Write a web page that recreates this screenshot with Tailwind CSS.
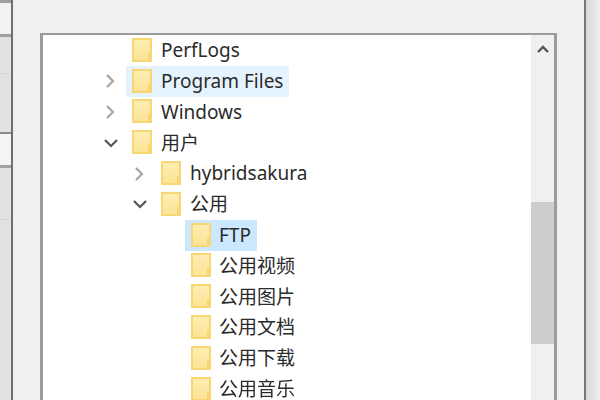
<!doctype html>
<html lang="zh">
  <head>
    <meta charset="UTF-8" />
    <title>FTP</title>
    <script src="https://cdn.jsdelivr.net/npm/@tailwindcss/browser@4"></script>
  </head>
  <body class="w-[600px] h-[400px] overflow-hidden bg-[#f0f0f0] font-['Noto_Sans','Noto_Sans_CJK_SC',sans-serif] text-[19px] text-[#2b2b2b]">
    <svg width="0" height="0" class="absolute">
      <defs>
        <linearGradient id="folderfill" x1="0" y1="0" x2="0" y2="1">
          <stop offset="0" stop-color="#fdeeb4" />
          <stop offset="1" stop-color="#fde394" />
        </linearGradient>
        <g id="folder">
          <rect x="1" y="1" width="18" height="22" fill="url(#folderfill)" stroke="#f7d674" stroke-width="2" />
          <rect x="16" y="15" width="4" height="9" fill="#f7d674" />
        </g>
        <path id="right" d="M2 2l6 6-6 6" fill="none" stroke="#a6a6a6" stroke-width="2.2" />
        <path id="down" d="M2 2l6 6 6-6" fill="none" stroke="#555" stroke-width="2.2" />
      </defs>
    </svg>
    <div class="flex h-full blur-[0.4px]">
      <!-- window behind the dialog -->
      <div class="w-[13px] shrink-0 flex flex-col border-r-2 border-[#6e6e6e]">
        <div class="h-[37px] bg-[#f2f2f2] border-y-[3px] border-[#a0a0a0]"></div>
        <div class="h-[37px] bg-[#e2e2e2] border-b border-[#d6d6d6]"></div>
        <div class="h-[60px] bg-[#e2e2e2] border-b-2 border-[#8c8c8c]"></div>
        <div class="h-[34px] bg-[#f4f4f4] border-b-[3px] border-[#a0a0a0]"></div>
        <div class="h-[52px] bg-[#e2e2e2] border-b border-[#d6d6d6]"></div>
        <div class="flex-1 bg-[#e2e2e2]"></div>
      </div>

      <!-- dialog -->
      <div class="w-[571px] shrink-0 pl-[27px] pr-[27px] pt-[33px]">
        <div class="h-[367px] flex bg-white border-l-[3px] border-r-[3px] border-t-[2px] border-[#9c9c9c]">
          <div class="flex-1 min-w-0">
            <div class="h-[30.8px] flex items-center pl-[89px]">
              <svg width="21" height="25" class="mr-[8px]"><use href="#folder" /></svg>
              <span>PerfLogs</span>
            </div>
            <div class="h-[30.8px] flex items-center pl-[83px]">
              <div class="absolute ml-[-21px]"><svg width="10" height="16" class="block"><use href="#right" /></svg></div>
              <div class="h-full flex items-center pl-[6px] pr-[6px] bg-[#e5f3ff]">
                <svg width="21" height="25" class="mr-[8px]"><use href="#folder" /></svg>
                <span>Program Files</span>
              </div>
            </div>
            <div class="h-[30.8px] flex items-center pl-[89px]">
              <div class="absolute ml-[-27px]"><svg width="10" height="16" class="block"><use href="#right" /></svg></div>
              <svg width="21" height="25" class="mr-[8px]"><use href="#folder" /></svg>
              <span>Windows</span>
            </div>
            <div class="h-[30.8px] flex items-center pl-[89px]">
              <div class="absolute ml-[-29px]"><svg width="16" height="10" class="block"><use href="#down" /></svg></div>
              <svg width="21" height="25" class="mr-[8px]"><use href="#folder" /></svg>
              <span>用户</span>
            </div>
            <div class="h-[30.8px] flex items-center pl-[118px]">
              <div class="absolute ml-[-27px]"><svg width="10" height="16" class="block"><use href="#right" /></svg></div>
              <svg width="21" height="25" class="mr-[8px]"><use href="#folder" /></svg>
              <span>hybridsakura</span>
            </div>
            <div class="h-[30.8px] flex items-center pl-[118px]">
              <div class="absolute ml-[-29px]"><svg width="16" height="10" class="block"><use href="#down" /></svg></div>
              <svg width="21" height="25" class="mr-[8px]"><use href="#folder" /></svg>
              <span>公用</span>
            </div>
            <div class="h-[30.8px] flex items-center pl-[142px]">
              <div class="h-full flex items-center pl-[6px] pr-[6px] bg-[#cce8ff]">
                <svg width="21" height="25" class="mr-[7px]"><use href="#folder" /></svg>
                <span>FTP</span>
              </div>
            </div>
            <div class="h-[30.8px] flex items-center pl-[148px]">
              <svg width="21" height="25" class="mr-[7px]"><use href="#folder" /></svg>
              <span>公用视频</span>
            </div>
            <div class="h-[30.8px] flex items-center pl-[148px]">
              <svg width="21" height="25" class="mr-[7px]"><use href="#folder" /></svg>
              <span>公用图片</span>
            </div>
            <div class="h-[30.8px] flex items-center pl-[148px]">
              <svg width="21" height="25" class="mr-[7px]"><use href="#folder" /></svg>
              <span>公用文档</span>
            </div>
            <div class="h-[30.8px] flex items-center pl-[148px]">
              <svg width="21" height="25" class="mr-[7px]"><use href="#folder" /></svg>
              <span>公用下载</span>
            </div>
            <div class="h-[30.8px] flex items-center pl-[148px]">
              <svg width="21" height="25" class="mr-[7px]"><use href="#folder" /></svg>
              <span>公用音乐</span>
            </div>
          </div>

          <!-- scrollbar -->
          <div class="w-[23px] shrink-0 bg-[#f0f0f0] flex flex-col">
            <div class="h-[167px] pt-[9px] flex justify-center">
              <svg width="14" height="10"><path d="M2 8l5-5 5 5" fill="none" stroke="#555" stroke-width="2.4" /></svg>
            </div>
            <div class="h-[142px] bg-[#cdcdcd]"></div>
          </div>
        </div>
      </div>

      <!-- window behind, right side -->
      <div class="flex-1 border-l-2 border-[#777] bg-gradient-to-r from-[#d8d8d8] to-[#eeeeee]"></div>
    </div>
  </body>
</html>
